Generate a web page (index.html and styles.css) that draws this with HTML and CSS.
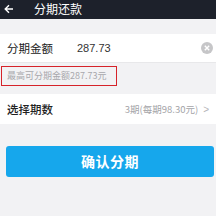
FILE: index.html
```html
<!DOCTYPE html>
<html lang="zh-CN">
<head>
	<meta charset="UTF-8">
	<title>分期还款</title>
	<link rel="stylesheet" href="styles.css">
</head>
<body>
<div class="header">
	<svg class="back" width="10" height="10" viewBox="0 0 10 10">
		<path d="M9 5H1.5M5 1.2L1.2 5L5 8.8" fill="none" stroke="#fff" stroke-width="1.4"/>
	</svg>
	<span class="title">分期还款</span>
</div>
<div class="row amount">
	<span class="label">分期金额</span>
	<span class="value">287.73</span>
	<span class="clear">
		<svg width="12" height="12" viewBox="0 0 12 12">
			<circle cx="6" cy="6" r="6" fill="#c6c6c8"/>
			<path d="M3.8 3.8L8.2 8.2M8.2 3.8L3.8 8.2" stroke="#fff" stroke-width="1.4"/>
		</svg>
	</span>
</div>
<div class="hint">
	<span class="hint-box">最高可分期金额287.73元</span>
</div>
<div class="row period">
	<span class="label">选择期数</span>
	<span class="period-val">3期(每期98.30元)</span>
	<span class="arrow">&gt;</span>
</div>
<div class="btn">确认分期</div>
</body>
</html>
```
FILE: styles.css
```css
*{margin: 0;padding: 0;}
body{
	background:#f2f2f4;
	font-family:"Noto Sans CJK SC","Liberation Sans",sans-serif;
	width:216px;
	height:216px;
	overflow:hidden;
}
.header{
	height:19px;
	background:#1d212b;
	display:flex;
	align-items:center;
	padding-left:4px;
}
.back{
	display:block;
	margin-top:-2px;
}
.title{
	color:#fff;
	font-size:12px;
	margin-left:20px;
	margin-top:-2px;
}
.row{
	background:#fff;
	display:flex;
	align-items:center;
	padding:0 7px;
}
.amount{
	margin-top:15px;
	height:28px;
	border-bottom:1px solid #e8e8ea;
}
.label{
	font-size:11.5px;
	color:#222;
	width:70px;
}
.value{
	font-family:"Liberation Sans",sans-serif;
	font-size:11px;
	color:#333;
	flex:1;
}
.clear svg{
	display:block;
	margin-right:-4px;
}
.hint{
	height:26px;
	display:flex;
	align-items:center;
	padding-left:1px;
}
.hint-box{
	border:1.5px solid #d6232a;
	height:18px;
	width:109px;
	padding-left:5px;
	font-size:9px;
	line-height:18px;
	color:#a8a8ac;
}
.period{
	margin-top:5px;
	height:30px;
}
.period .label{
	flex:1;
	font-weight:500;
}
.period-val{
	font-size:9.5px;
	color:#a4a4a8;
}
.arrow{
	font-family:"Liberation Sans",sans-serif;
	font-size:10px;
	color:#b4b4b8;
	margin-left:5px;
}
.btn{
	margin:22px 2px 0 6px;
	height:31px;
	border-radius:3px;
	background:#16a7ec;
	color:#fff;
	font-size:14px;
	font-weight:bold;
	text-align:center;
	line-height:31px;
	letter-spacing:0.5px;
}
```
